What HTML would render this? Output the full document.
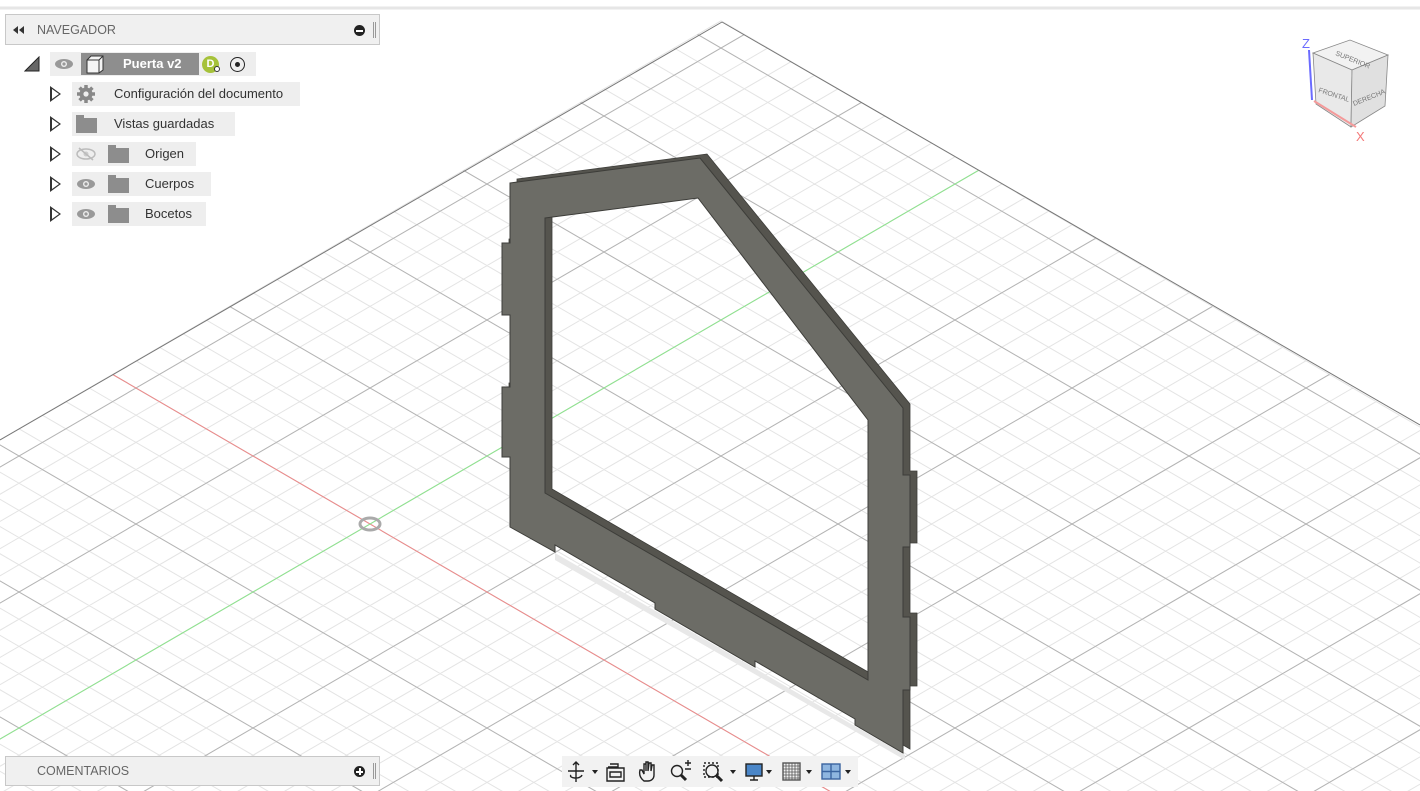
<!DOCTYPE html>
<html><head><meta charset="utf-8"><style>
*{margin:0;padding:0;box-sizing:border-box}
html,body{width:1420px;height:791px;overflow:hidden}
body{background:#fff;font-family:"Liberation Sans",sans-serif;position:relative}
.abs{position:absolute}
.nav{left:5px;top:14px;width:375px;height:31px;background:#f0f0f0;border:1px solid #c8c8c8}
.nav span{position:absolute;left:31px;top:8px;font-size:12.5px;color:#666}
.row{position:absolute;height:24px;background:#eeeeee;font-size:13px;color:#333;line-height:24px}
.tri{position:absolute;width:0;height:0;border-top:8px solid transparent;border-bottom:8px solid transparent;border-left:11px solid #333}
.tri i{position:absolute;left:-9.5px;top:-5px;width:0;height:0;border-top:5px solid transparent;border-bottom:5px solid transparent;border-left:7px solid #fff}
.fold{position:absolute;width:21px;height:15px;background:#8d8d8d}
.fold:before{content:"";position:absolute;left:0;top:-3px;width:8px;height:3px;background:#8d8d8d}
.com{left:5px;top:756px;width:375px;height:30px;background:#f0f0f0;border:1px solid #c8c8c8}
.com span{position:absolute;left:31px;top:7px;font-size:12.5px;color:#666}
</style></head><body>
<svg class="abs" style="left:0;top:0" width="1420" height="791">
<line x1="0" y1="8" x2="1420" y2="8" stroke="#e6e6e6" stroke-width="3"/>
<g id="grid" transform="matrix(23.4,13.6,23.4,-13.6,370,524)" fill="none">
<path id="mn" stroke="#e4e4e4" vector-effect="non-scaling-stroke" d=""/>
</g>
<path d="M722 22 L0 440" stroke="#777" stroke-width="1"/>
<path d="M722 22 L1420 425" stroke="#777" stroke-width="1"/>
<ellipse cx="370" cy="524" rx="10" ry="6" fill="none" stroke="#aaa" stroke-width="3"/>
<polygon points="555,553 905,755 905,760 555,560" fill="#e8e8e8"/>
<path fill="#55544e" stroke="#3d3d39" stroke-width="0.8" fill-rule="evenodd" d="M517,179 L707,154 L910,404 L910,471 L917,471 L917,543 L910,543 L910,613 L917,613 L917,686 L910,686 L910,749 L862,721 L862,715 L762,657 L762,663 L662,605 L662,599 L562,541 L562,548 L517,523 L517,453 L509,453 L509,383 L517,383 L517,311 L509,311 L509,239 L517,239 Z M552,214 L705,194 L875,416 L875,676 L552,489 Z"/>
<path fill="#6c6c66" stroke="#3d3d39" stroke-width="1" fill-rule="evenodd" d="M510,183 L700,158 L903,408 L903,475 L910,475 L910,547 L903,547 L903,617 L910,617 L910,690 L903,690 L903,753 L855,725 L855,719 L755,661 L755,667 L655,609 L655,603 L555,545 L555,552 L510,527 L510,457 L502,457 L502,387 L510,387 L510,315 L502,315 L502,243 L510,243 Z M545,218 L698,198 L868,420 L868,680 L545,493 Z"/>
<g>
<polygon points="1313,53 1350,40 1388,55 1352,70" fill="#f2f2f2" stroke="#888" stroke-width="0.8"/>
<polygon points="1313,53 1352,70 1351,127 1316,104" fill="#e9e9e9" stroke="#888" stroke-width="0.8"/>
<polygon points="1352,70 1388,55 1385,106 1351,127" fill="#e0e0e0" stroke="#888" stroke-width="0.8"/>
<line x1="1309" y1="50" x2="1312" y2="100" stroke="#6b6bff" stroke-width="2"/>
<line x1="1314" y1="101" x2="1356" y2="127" stroke="#f49a9a" stroke-width="2"/>
<text x="1302" y="48" font-size="13" fill="#6b6bff">Z</text>
<text x="1356" y="141" font-size="13" fill="#f47a7a">X</text>
<text x="1318" y="92" font-size="7" fill="#777" transform="rotate(18 1318 92)">FRONTAL</text>
<text x="1354" y="106" font-size="7" fill="#777" transform="rotate(-22 1354 106)">DERECHA</text>
<text x="1335" y="55" font-size="7" fill="#777" transform="rotate(22 1335 55)">SUPERIOR</text>
</g>
</svg>
<script>
(function(){var d="";for(var u=-11;u<=60;u++){d+="M"+u+" -40L"+u+" 26";}for(var v=-40;v<=26;v++){d+="M-11 "+v+"L60 "+v;}
var ns="http://www.w3.org/2000/svg",g=document.getElementById("grid");
document.getElementById("mn").setAttribute("d",d);
function add(dd,c){var q=document.createElementNS(ns,"path");q.setAttribute("d",dd);q.setAttribute("stroke",c);q.setAttribute("vector-effect","non-scaling-stroke");g.appendChild(q);}
var maj="";for(var u=-10;u<=60;u+=5){maj+="M"+u+" -40L"+u+" 26";}for(var v=-40;v<=25;v+=5){maj+="M-11 "+v+"L60 "+v;}
add(maj,"#b4b4b4");add("M-11 0L60 0","#f08a8a");add("M0 -40L0 26","#8ee88e");
})();
</script>
<div class="abs nav"><svg class="abs" style="left:6px;top:10px" width="14" height="10"><path d="M6 1L1 5L6 9ZM12 1L7 5L12 9Z" fill="#333"/></svg><span>NAVEGADOR</span>
<div class="abs" style="left:348px;top:10px;width:11px;height:11px;border-radius:50%;background:#222"><div style="position:absolute;left:2px;top:4.5px;width:7px;height:2px;background:#fff"></div></div>
<div class="abs" style="left:367px;top:7px;width:3px;height:16px;border-left:1px solid #999;border-right:1px solid #999"></div></div>
<svg class="abs" style="left:24px;top:56px" width="16" height="16"><path d="M1 15L15 1L15 15Z" fill="#666" stroke="#222"/></svg>
<div class="row" style="left:50px;top:52px;width:206px"></div>
<svg class="abs" style="left:54px;top:58px" width="20" height="12"><ellipse cx="10" cy="6" rx="9" ry="5" fill="#999"/><circle cx="10" cy="6" r="3" fill="#eee"/><circle cx="10" cy="6" r="1.6" fill="#999"/></svg>
<div class="abs" style="left:81px;top:53px;width:118px;height:22px;background:#8e8e8e;color:#fff;font-weight:bold;font-size:13px;line-height:22px;padding-left:42px">Puerta v2</div>
<svg class="abs" style="left:84px;top:54px" width="22" height="20"><path d="M3 6L7 2L19 2L19 16L15 19L3 19Z" fill="#f4f4f4" stroke="#333"/><path d="M3 6L15 6L15 19M15 6L19 2" fill="none" stroke="#333"/></svg>
<div class="abs" style="left:202px;top:56px;width:17px;height:17px;border-radius:50%;background:#a6c23a;color:#fff;font-size:11px;font-weight:bold;text-align:center;line-height:17px">D</div>
<div class="abs" style="left:214px;top:66px;width:6px;height:6px;border-radius:50%;background:#fff;border:1px solid #333"></div>
<div class="abs" style="left:230px;top:57px;width:15px;height:15px;border-radius:50%;border:1.5px solid #222"><div style="position:absolute;left:3.5px;top:3.5px;width:5px;height:5px;border-radius:50%;background:#222"></div></div>

<div class="tri" style="left:50px;top:86px"><i></i></div>
<div class="row" style="left:72px;top:82px;width:228px;padding-left:42px">Configuración del documento</div>
<svg class="abs" style="left:76px;top:84px" width="20" height="20"><g fill="#888"><circle cx="10" cy="10" r="6.5"/><g stroke="#888" stroke-width="3.5"><path d="M10 1V19M1 10H19M3.6 3.6L16.4 16.4M16.4 3.6L3.6 16.4"/></g></g><circle cx="10" cy="10" r="2.6" fill="#eee"/></svg>
<div class="tri" style="left:50px;top:116px"><i></i></div>
<div class="row" style="left:72px;top:112px;width:163px;padding-left:42px">Vistas guardadas</div>
<div class="fold" style="left:76px;top:118px"></div>
<div class="tri" style="left:50px;top:146px"><i></i></div>
<div class="row" style="left:72px;top:142px;width:124px;padding-left:73px">Origen</div>
<svg class="abs" style="left:76px;top:147px" width="20" height="14"><ellipse cx="10" cy="7" rx="9" ry="5" fill="none" stroke="#bbb" stroke-width="1.5"/><circle cx="10" cy="7" r="2.5" fill="#ccc"/><line x1="3" y1="1" x2="17" y2="13" stroke="#bbb" stroke-width="1.5"/></svg>
<div class="fold" style="left:108px;top:148px"></div>
<div class="tri" style="left:50px;top:176px"><i></i></div>
<div class="row" style="left:72px;top:172px;width:139px;padding-left:73px">Cuerpos</div>
<svg class="abs" style="left:76px;top:178px" width="20" height="12"><ellipse cx="10" cy="6" rx="9" ry="5" fill="#999"/><circle cx="10" cy="6" r="3" fill="#eee"/><circle cx="10" cy="6" r="1.6" fill="#999"/></svg>
<div class="fold" style="left:108px;top:178px"></div>
<div class="tri" style="left:50px;top:206px"><i></i></div>
<div class="row" style="left:72px;top:202px;width:134px;padding-left:73px">Bocetos</div>
<svg class="abs" style="left:76px;top:208px" width="20" height="12"><ellipse cx="10" cy="6" rx="9" ry="5" fill="#999"/><circle cx="10" cy="6" r="3" fill="#eee"/><circle cx="10" cy="6" r="1.6" fill="#999"/></svg>
<div class="fold" style="left:108px;top:208px"></div>

<div class="abs com"><span>COMENTARIOS</span>
<div class="abs" style="left:348px;top:9px;width:11px;height:11px;border-radius:50%;background:#222"><div style="position:absolute;left:2px;top:4.5px;width:7px;height:2px;background:#fff"></div><div style="position:absolute;left:4.5px;top:2px;width:2px;height:7px;background:#fff"></div></div>
<div class="abs" style="left:367px;top:6px;width:3px;height:16px;border-left:1px solid #999;border-right:1px solid #999"></div></div>

<div class="abs" style="left:562px;top:756px;width:296px;height:31px;background:#f2f2f2"></div>
<svg class="abs" style="left:562px;top:756px" width="296" height="31">
<g fill="none" stroke="#222" stroke-width="1.4">
<path d="M14 6L14 26M6 15L22 15M11 9L14 6L17 9M9 19C6 22 18 24 20 19"/>
<path d="M46 11L56 11L56 8L48 8M45 12L62 12L62 25L45 25Z M48 16L59 16L59 21L48 21Z"/>
<path d="M82 25C78 22 77 18 78 14L80 14L82 18L82 8L84 8L84 15L84 6L86 6L86 15L87 7L89 7L89 15L90 9L92 9L92 19C92 23 89 25 86 25Z"/>
<circle cx="115" cy="15" r="5.5"/><path d="M119 19L124 24" stroke-width="3"/><path d="M123 7L129 7M126 4L126 10M123 13L129 13"/>
<rect x="142" y="7" width="14" height="14" stroke-dasharray="2 2"/><circle cx="150" cy="15" r="6"/><path d="M154 19L160 25" stroke-width="3"/>
<rect x="184" y="8" width="16" height="12" fill="#4a86c8"/><path d="M188 24L196 24M192 20L192 24"/>
<rect x="221" y="7" width="17" height="17" stroke="#555"/><path d="M224 7V24M227 7V24M230 7V24M233 7V24M236 7V24M221 10H238M221 13H238M221 16H238M221 19H238M221 22H238" stroke="#555" stroke-width="0.8"/>
<rect x="260" y="8" width="18" height="15" fill="#8fb6e0" stroke="#3a64a0"/><path d="M269 8V23M260 15.5H278" stroke="#3a64a0"/>
</g>
<g fill="#222"><path d="M30 14L36 14L33 18Z"/><path d="M168 14L174 14L171 18Z"/><path d="M204 14L210 14L207 18Z"/><path d="M244 14L250 14L247 18Z"/><path d="M283 14L289 14L286 18Z"/></g>
</svg>
</body></html>
